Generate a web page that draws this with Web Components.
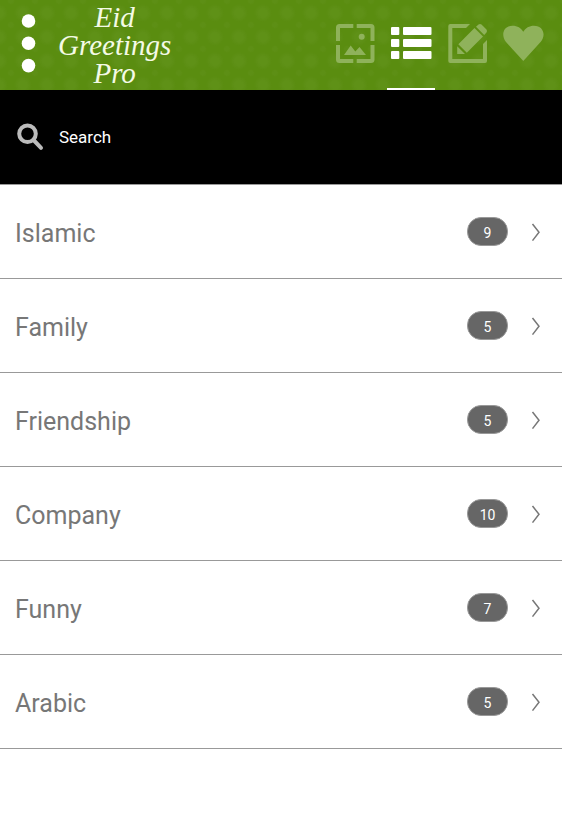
<!DOCTYPE html>
<html lang="en">
<head>
  <meta charset="UTF-8">
  <meta name="viewport" content="width=device-width, initial-scale=1.0">
  <title>Eid Greetings Pro</title>
  <style>
    body {
      margin: 0;
      background-color: #fff;
      font-family: Roboto, 'Liberation Sans', sans-serif;
    }
  </style>
</head>
<body>
  <app-header>
    <span>Eid</span>
    <span>Greetings</span>
    <span>Pro</span>
    <tab-button slot="tabs" icon="gallery" label="Gallery"></tab-button>
    <tab-button slot="tabs" icon="list" label="Categories" active></tab-button>
    <tab-button slot="tabs" icon="edit" label="Edit"></tab-button>
    <tab-button slot="tabs" icon="heart" label="Favourites"></tab-button>
  </app-header>
  <search-bar placeholder="Search"></search-bar>
  <main>
    <category-row count="9">Islamic</category-row>
    <category-row count="5">Family</category-row>
    <category-row count="5">Friendship</category-row>
    <category-row count="10">Company</category-row>
    <category-row count="7">Funny</category-row>
    <category-row count="5">Arabic</category-row>
  </main>

  <script>
    class AppHeader extends HTMLElement {
      constructor() {
        super();
        this.attachShadow({ mode: 'open' });
        this.shadowRoot.innerHTML = /* HTML */ `
          <style>
            :host {
              display: block;
              background-color: #5a8d10;
              background-image:
                radial-gradient(circle, rgba(255, 255, 255, 0.03) 4px, transparent 9px),
                radial-gradient(circle, rgba(255, 255, 255, 0.02) 2px, transparent 4px);
              background-size: 24px 24px;
              background-position: 11px 1px, 23px 13px;
            }

            header {
              display: flex;
              align-items: center;
              height: 90px;
              padding: 0 15px 0 16px;
            }

            .menu {
              width: 25px;
              height: 62px;
              padding: 0;
              border: 0;
              background: none;
              cursor: pointer;
            }

            .menu svg {
              display: block;
            }

            h1 {
              display: flex;
              flex-direction: column;
              align-items: center;
              margin: 0 0 0 17px;
              color: #f4fae6;
              font-family: 'Liberation Serif', serif;
              font-size: 29px;
              font-style: italic;
              font-weight: normal;
              line-height: 28px;
            }

            nav {
              display: flex;
              align-self: stretch;
              gap: 8px;
              margin-left: auto;
            }
          </style>
          <header>
            <button class="menu" aria-label="Menu">
              <svg width="25" height="62" viewBox="0 0 25 62" fill="#fff">
                <circle cx="12.5" cy="7" r="6.8"/>
                <circle cx="12.5" cy="29.3" r="6.8"/>
                <circle cx="12.5" cy="51.6" r="6.8"/>
              </svg>
            </button>
            <h1><slot></slot></h1>
            <nav><slot name="tabs"></slot></nav>
          </header>
        `;
      }
    }

    const icons = {
      gallery: `
        <path d="M22.3 7H8.5q-1.5 0-1.5 1.5V22M25.7 7H40q1.5 0 1.5 1.5V22M22.3 42H8.5q-1.5 0-1.5-1.5V26M25.7 42H40q1.5 0 1.5-1.5V26" fill="none" stroke="currentColor" stroke-width="4"/>
        <circle cx="30.7" cy="17.7" r="3"/>
        <path d="M13 36l6.7-9.500 4.600 6L28.500 28l6.500 8z"/>`,
      list: `
        <rect x="4" y="8" width="8.3" height="8" rx="1"/>
        <rect x="16" y="8" width="28.5" height="8" rx="1"/>
        <rect x="4" y="20" width="8.3" height="8" rx="1"/>
        <rect x="16" y="20" width="28.5" height="8" rx="1"/>
        <rect x="4" y="32" width="8.3" height="8" rx="1"/>
        <rect x="16" y="32" width="28.5" height="8" rx="1"/>`,
      edit: `
        <path d="M27 5H7.3q-2 0-2 2V42q0 2 2 2H42q2 0 2-2V21l-4 4V40H9.3V9H23z"/>
        <path d="M14.2 27.300l7.800 7.700h-7.800zM15.300 25.300L31.500 9l8.500 8.500-16.200 16.200zM33 7.700L35.500 5.500q1.500-1 3 0l5 5q1 1.500 0 3l-2.300 2.500z"/>`,
      heart: `
        <path d="M24.3 42L7 23C1.5 16 4.5 6.7 13.5 6.7c5 0 8.5 2.300 10.800 6 2.300-3.700 5.800-6 10.800-6 9 0 12.500 9.300 6.500 16.300z"/>`
    };

    class TabButton extends HTMLElement {
      constructor() {
        super();
        this.attachShadow({ mode: 'open' });
        this.shadowRoot.innerHTML = /* HTML */ `
          <style>
            :host {
              display: block;
              color: #8fb25b;
            }

            :host([active]) {
              color: #fff;
            }

            button {
              display: flex;
              align-items: flex-start;
              box-sizing: border-box;
              width: 48px;
              height: 100%;
              padding: 19px 0 0;
              border: 0;
              border-bottom: 2px solid transparent;
              background: none;
              color: inherit;
              cursor: pointer;
            }

            :host([active]) button {
              border-bottom-color: #fff;
            }
          </style>
          <button>
            <svg width="48" height="48" viewBox="0 0 48 48" fill="currentColor"></svg>
          </button>
        `;
      }

      connectedCallback() {
        const shadow = this.shadowRoot;
        shadow.querySelector('svg').innerHTML = icons[this.getAttribute('icon')];
        shadow.querySelector('button').setAttribute('aria-label', this.getAttribute('label'));
      }
    }

    class SearchBar extends HTMLElement {
      constructor() {
        super();
        this.attachShadow({ mode: 'open' });
        this.shadowRoot.innerHTML = /* HTML */ `
          <style>
            :host {
              display: block;
              background-color: #000;
              border-bottom: 1px solid #999;
            }

            label {
              display: flex;
              align-items: center;
              gap: 15px;
              height: 94px;
              padding: 0 16px;
            }

            svg {
              flex: none;
            }

            input {
              flex: 1;
              min-width: 0;
              padding: 0;
              border: 0;
              outline: 0;
              background: none;
              color: #fff;
              font-family: inherit;
              font-size: 17px;
              line-height: 24px;
            }

            input::placeholder {
              color: #fff;
              opacity: 1;
            }
          </style>
          <label>
            <svg width="28" height="28" viewBox="0 0 28 28" fill="none" stroke="#bbb" stroke-width="4" stroke-linecap="round">
              <circle cx="11.5" cy="10.7" r="8.3"/>
              <path d="M18 17.5l7 7.3"/>
            </svg>
            <input type="text">
          </label>
        `;
      }

      connectedCallback() {
        const input = this.shadowRoot.querySelector('input');
        input.placeholder = this.getAttribute('placeholder');
        input.setAttribute('aria-label', this.getAttribute('placeholder'));
      }
    }

    class CategoryRow extends HTMLElement {
      constructor() {
        super();
        this.attachShadow({ mode: 'open' });
        this.shadowRoot.innerHTML = /* HTML */ `
          <style>
            :host {
              display: block;
              border-bottom: 1px solid #999;
            }

            a {
              display: flex;
              align-items: center;
              height: 93px;
              padding: 0 20px 0 15px;
              color: #777;
              font-size: 25px;
              line-height: 32px;
              text-decoration: none;
            }

            .name {
              flex: 1;
              padding-top: 4px;
            }

            .count {
              box-sizing: border-box;
              width: 41px;
              height: 29px;
              padding-top: 2px;
              border: 1px solid #999;
              border-radius: 14px;
              background-color: #666;
              color: #fff;
              font-size: 14px;
              line-height: 27px;
              text-align: center;
            }

            svg {
              margin-left: 23px;
            }
          </style>
          <a href="#">
            <span class="name"><slot></slot></span>
            <span class="count"></span>
            <svg width="11" height="20" viewBox="0 0 11 20" fill="none" stroke="#777" stroke-width="1.5">
              <path d="M1.5 2l6.5 8.300-6.500 8.300"/>
            </svg>
          </a>
        `;
      }

      connectedCallback() {
        this.shadowRoot.querySelector('.count').textContent = this.getAttribute('count');
      }
    }

    customElements.define('app-header', AppHeader);
    customElements.define('tab-button', TabButton);
    customElements.define('search-bar', SearchBar);
    customElements.define('category-row', CategoryRow);
  </script>
</body>
</html>
